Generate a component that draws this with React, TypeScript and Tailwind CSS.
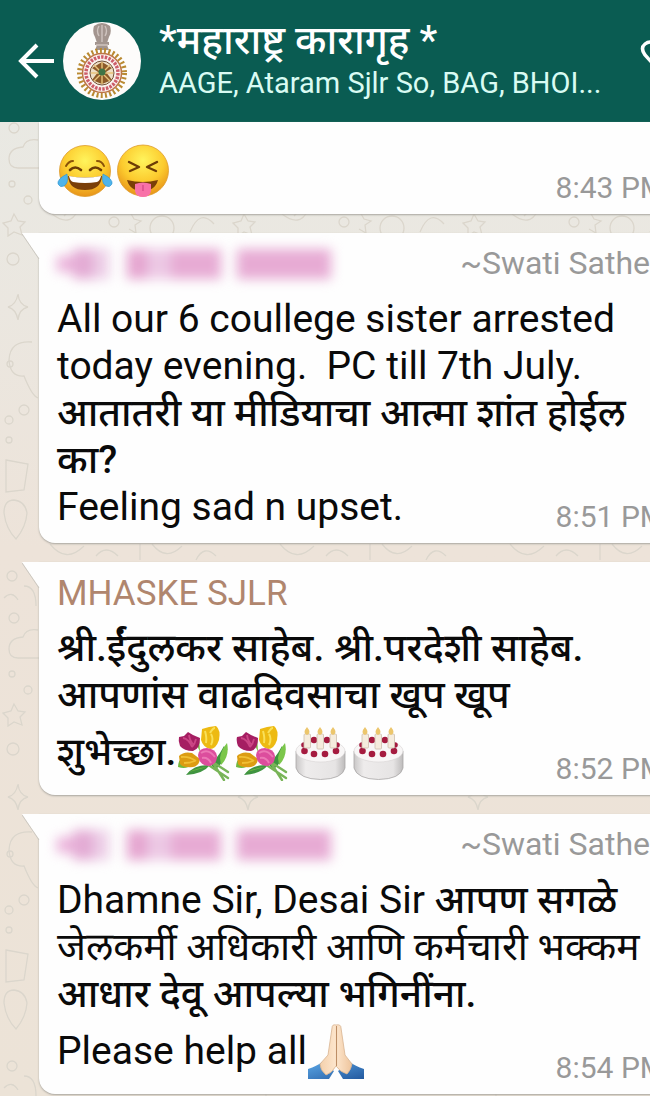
import type { ReactNode } from "react";

const EMOJI = "mt-1.5 mb-0.5 inline-block h-14 w-[58px] align-[-18px]";

function Gradients() {
  return (
    <svg width="0" height="0" className="absolute" aria-hidden="true">
      <defs>
        <radialGradient id="face" cx="0.5" cy="0.3" r="0.75">
          <stop offset="0" stopColor="#fff45c" />
          <stop offset="0.55" stopColor="#fccb2e" />
          <stop offset="1" stopColor="#e48a15" />
        </radialGradient>
        <linearGradient id="cake" x1="0" x2="1">
          <stop offset="0" stopColor="#c9c7c7" />
          <stop offset="0.2" stopColor="#eeecec" />
          <stop offset="0.8" stopColor="#e6e4e4" />
          <stop offset="1" stopColor="#bdbbbb" />
        </linearGradient>
        <linearGradient id="sleeve" x1="0" x2="1" y2="1">
          <stop offset="0" stopColor="#5ba7e6" />
          <stop offset="1" stopColor="#23599f" />
        </linearGradient>
        <linearGradient id="skin" x1="0" x2="1">
          <stop offset="0" stopColor="#f4d0ac" />
          <stop offset="0.5" stopColor="#fde6cd" />
          <stop offset="1" stopColor="#eec49c" />
        </linearGradient>
      </defs>
    </svg>
  );
}

function Joy() {
  return (
    <svg viewBox="0 0 58 56" className={EMOJI} role="img" aria-label="Tears of joy">
      <circle cx="28" cy="27" r="25.5" fill="url(#face)" stroke="#dd9a2b" strokeWidth="0.8" />
      <path d="M9 22q3-5 7-5M40 17q5 0 7 5" fill="none" stroke="#8a5208" strokeWidth="2" strokeLinecap="round" />
      <path d="M13 26q5-5 11 0M33 26q5-5 11 0" fill="none" stroke="#6d3d06" strokeWidth="2.6" strokeLinecap="round" />
      <path d="M11 32q17 3 34 0q-1 14-17 14t-17-14z" fill="#7a3f08" />
      <path d="M12 32q16 3 32 0q-1 5-4 6q-12 2-24 0q-3-1-4-6z" fill="#fff" />
      <path d="M10 30q2 9-3 12q-4 2-6-2q-1-5 9-10zM46 30q-2 9 3 12q4 2 6-2q1-5-9-10z" fill="#4fb4ea" stroke="#2f93d2" strokeWidth="0.6" />
    </svg>
  );
}

function Squint() {
  return (
    <svg viewBox="0 0 58 56" className={EMOJI} role="img" aria-label="Squinting with tongue">
      <circle cx="28" cy="26.5" r="25.5" fill="url(#face)" stroke="#dd9a2b" strokeWidth="0.8" />
      <path d="M14 18l10 5l-9 4M42 18l-10 5l9 4" fill="none" stroke="#6d3d06" strokeWidth="2.4" strokeLinecap="round" strokeLinejoin="round" />
      <path d="M12 36q16 4 31 0q-3 11-15.5 11t-15.5-11z" fill="#7a3f08" />
      <path d="M20 40q8-3 16 0v7q-1 6-8 6t-8-6z" fill="#f871a8" />
      <path d="M28 41v6" stroke="#d84c88" strokeWidth="1.4" />
    </svg>
  );
}

function Bouquet() {
  return (
    <svg viewBox="0 0 58 56" className={EMOJI} role="img" aria-label="Bouquet">
      <path d="M10 50q8-11 24-10q-7 9-24 10zM34 38q6-2 14-17q5 12-9 24z" fill="#3f9440" />
      <path d="M6 33q-4 3-4 9q9 3 14-3zM23 12q-3 9 1 15zM13 47q8-4 18-5" fill="#72b93e" />
      <path d="M28 37l24 16M32 34l20 13M35 35l13 20" stroke="#78b457" strokeWidth="2.4" strokeLinecap="round" />
      <path d="M44 33q1-8 7-15q3 13-6 22z" fill="#7bc64a" />
      <path d="M3 12l5-1l4-4l5 3l7 3q0 11-7 13q-9 0-13-5q-2-5-1-9z" fill="#a51e62" />
      <path d="M7 13q6 1 9 9M13 10q1 7 5 10M20 14q-1 5-4 8" stroke="#cb4585" strokeWidth="1.8" fill="none" />
      <path d="M26 4l7-2l7-1q5 4 3 14q-3 9-9 9q-7-2-9-9z" fill="#edba12" />
      <path d="M29 6q2 7 1 12M34 8q3-5 5-5M35 9q3 5 0 11" stroke="#f9e058" strokeWidth="2" fill="none" />
      <path d="M3 31q5-5 13-3l8 6q-1 7-7 8q-10 1-13-3z" fill="#dc9c12" />
      <path d="M5 32q8-1 15 4M8 38q6 0 11-2" stroke="#f1bf34" strokeWidth="1.8" fill="none" />
      <path d="M22 30q1-7 9-7q9 1 10 8q0 8-7 10q-11 0-12-11z" fill="#dc4d9d" />
      <path d="M25 28q7-5 14 4M26 33q6-1 9 5" stroke="#ec78b5" strokeWidth="2" fill="none" />
    </svg>
  );
}

function Cake() {
  return (
    <svg viewBox="0 0 58 56" className={EMOJI} role="img" aria-label="Birthday cake">
      <path d="M4 26v17q3 11 24.5 11.5q22-.5 24.5-11.5v-17z" fill="url(#cake)" stroke="#aaa7a7" strokeWidth="0.8" />
      <ellipse cx="28.5" cy="26" rx="24.5" ry="11" fill="#f8f6f6" stroke="#d6d3d3" strokeWidth="0.6" />
      <g fill="#a51b3f">
        <circle cx="22" cy="15" r="3.2" />
        <circle cx="35" cy="15" r="3.2" />
        <circle cx="12" cy="20" r="2.8" />
        <circle cx="45" cy="20" r="2.8" />
        <circle cx="12.5" cy="26" r="3.3" />
        <circle cx="22" cy="29" r="3.3" />
        <circle cx="33" cy="29" r="3.3" />
        <circle cx="44" cy="26" r="3.3" />
      </g>
      <g fill="#f5ecdd" stroke="#cdbfae" strokeWidth="0.8">
        <rect x="12" y="9" width="6.5" height="14" rx="1" />
        <rect x="25" y="9" width="6.5" height="15" rx="1" />
        <rect x="38" y="9" width="6.5" height="14" rx="1" />
      </g>
      <path d="M15 2q5 6 0 8q-5-2 0-8zM28 2q5 6 0 8q-5-2 0-8zM41 2q5 6 0 8q-5-2 0-8z" fill="#ecc66c" />
    </svg>
  );
}

function Pray() {
  return (
    <svg viewBox="0 0 58 56" className={EMOJI} role="img" aria-label="Folded hands">
      <path d="M1 45q9-3 14-7l12 9l-5 8h-21zM57 45q-9-3-14-7l-12 9l5 8h21z" fill="url(#sleeve)" />
      <path d="M25 4q0-4 4-3q5-1 5 3l4 27l7 9q-1 6-5 10q-7-2-11-8q-4 7-10 9q-6-5-6-11l8-9z" fill="url(#skin)" stroke="#d8b491" strokeWidth="0.8" />
      <path d="M29.5 2v40" fill="none" stroke="#bd8e66" strokeWidth="1.1" />
    </svg>
  );
}

function Avatar() {
  return (
    <svg viewBox="0 0 78 78" className="size-[78px] shrink-0" role="img" aria-label="Group photo">
      <circle cx="39" cy="39" r="39" fill="#fdfcfb" />
      <g fill="#a3958f">
        <path d="M31 4q8-6 16 0q2 6-1 11l-2 6h-10l-2-6q-3-5-1-11z" />
        <path d="M32 20h14v3h-2l2 5h-14l2-5h-2z" />
      </g>
      <path d="M36 4q-3 5 0 10M42 4q3 5 0 10M39 3v17M33 23h12" stroke="#cfc4bf" strokeWidth="1.4" fill="none" />
      <circle cx="39" cy="51" r="22.5" fill="none" stroke="#b98a32" strokeWidth="5" strokeDasharray="2 2.3" />
      <circle cx="39" cy="51" r="19.5" fill="#fbf2ef" stroke="#bc7547" strokeWidth="1.5" />
      <circle cx="39" cy="51" r="16" fill="none" stroke="#cc5d6a" strokeWidth="3.5" strokeDasharray="2.5 1.2" />
      <circle cx="39" cy="51" r="12" fill="#eedfc5" stroke="#735339" strokeWidth="1" />
      <path d="M29 46l10-6l10 6l-6 4l6 8l-10 4l-10-4l6-8z" fill="#8d5b29" />
      <path d="M39 40v22M28 51h22M31 43l16 16M47 43l-16 16" stroke="#e9c37b" strokeWidth="1.4" />
      <circle cx="39" cy="50" r="3.5" fill="#3f7445" />
    </svg>
  );
}

function Wallpaper() {
  return (
    <svg className="absolute inset-0 -z-10 h-full w-full" aria-hidden="true">
      <defs>
        <linearGradient id="paper" x1="0" y1="0" x2="0" y2="1">
          <stop offset="0" stopColor="#e8eae5" />
          <stop offset="0.28" stopColor="#ebe7e0" />
          <stop offset="0.5" stopColor="#ede3d9" />
          <stop offset="1" stopColor="#ece3d7" />
        </linearGradient>
        <pattern id="doodles" width="230" height="490" y="120" patternUnits="userSpaceOnUse">
          <g fill="none" stroke="#dbd6cc" strokeWidth="1.3">
            <path d="M38 20q-12-2-15 7q-14 1-14 12q0 9 9 9h26M14 94l4 7l7 1l-5 5l2 8l-8-3l-6 4v-8l-5-5l8-2z" />
            <circle cx="14" cy="8" r="5" />
            <circle cx="28" cy="80" r="4" />
            <circle cx="12" cy="64" r="3" />
            <circle cx="13" cy="139" r="6" />
            <path d="M18 174q1 11 10 13q-9 2-10 13q-2-11-10-13q8-2 10-13zM32 222q-22-2-23 18q1 17 15 16q8 20 14 22" />
            <path d="M52 94q18 14 26-4M64 96q16-19 30-2M130 92l4 7l7 2l-6 4l1 8l-7-4M190 112q10-24 24-8" />
            <circle cx="114" cy="102" r="5" />
            <circle cx="162" cy="108" r="12" />
            <circle cx="10" cy="244" r="3" />
            <circle cx="9" cy="300" r="4" />
            <circle cx="9" cy="320" r="3" />
            <circle cx="24" cy="290" r="5" />
            <path d="M6 340l22 4l-4 26l-18 2zM14 380q-10 0-10 13q2 16 12 26q10-12 11-26q-2-12-13-13z" />
            <path d="M50 424q16 20 34 2M96 436q10-12 22 0M140 424v16M152 424q14 18 30 2M196 440q8-16 20-4" />
            <circle cx="12" cy="456" r="5" />
            <path d="M24 466q12 0 12 20M4 478q8-8 14 2" />
          </g>
        </pattern>
      </defs>
      <rect width="100%" height="100%" fill="url(#paper)" />
      <rect width="100%" height="100%" fill="url(#doodles)" />
    </svg>
  );
}

function HiddenNumber() {
  return (
    <div className="flex gap-4 pt-1 blur-[6px]" role="img" aria-label="Hidden number">
      <div className="flex h-[30px] w-[54px] items-center">
        <div className="h-4 w-4 bg-[#eab2da]" />
        <div className="h-[30px] w-5 bg-[#e3abd4]" />
        <div className="h-[30px] w-4 bg-[#eccde6]" />
      </div>
      <div className="flex h-[30px] w-[94px]">
        <div className="w-5 bg-[#e5a5d0]" />
        <div className="w-6 bg-[#ecc8e4]" />
        <div className="flex-1 bg-[#e7abd4]" />
      </div>
      <div className="h-[30px] w-[94px] bg-[#e7abd4]" />
    </div>
  );
}

// Marathi runs are set a little heavier than the Latin text
function Mr({ children }: { children: string }) {
  return (
    <span lang="mr" className="font-medium">
      {children}
    </span>
  );
}

type BubbleProps = {
  time: string;
  author?: ReactNode;
  nick?: string;
  lastLine: ReactNode;
  children?: ReactNode;
};

function Bubble({ time, author, nick, lastLine, children }: BubbleProps) {
  return (
    <article className="relative ml-[39px] rounded-bl-2xl bg-[#fefefe] pr-4 pl-[18px] shadow-[0_1px_2px_#a9a69f]">
      {author ? (
        <>
          <svg viewBox="0 0 18 26" className="absolute top-0 -left-[17px] h-[26px] w-[18px]" aria-hidden="true">
            <path d="M0 0h18v26l-1-1z" fill="#fefefe" />
            <path d="M0 1l17 25" stroke="#cbc8c1" strokeWidth="1" />
          </svg>
          <header className="flex h-[63px] justify-between pt-3 pr-4 leading-10">
            <div className="text-[35px]">{author}</div>
            {nick && <span className="text-[32px] leading-9 text-[#999]">{nick}</span>}
          </header>
        </>
      ) : (
        <div className="h-4" />
      )}
      <div className="text-[39px] leading-[47px] whitespace-pre text-[#0a0a0a]">
        {children}
        <div className="flex items-end justify-between">
          <p className="pb-3">{lastLine}</p>
          <time className="pb-2 text-[30px] leading-9 text-[#999]">{time}</time>
        </div>
      </div>
    </article>
  );
}

export default function App() {
  return (
    <div className="relative isolate min-h-screen overflow-hidden font-[Roboto,'Noto_Sans_Devanagari','Noto_Sans',sans-serif]">
      <Gradients />
      <Wallpaper />

      <header className="flex h-[122px] items-center bg-[#0a5c52] pl-[18px] text-white">
        <button aria-label="Back" className="mr-[9px] shrink-0">
          <svg width="36" height="36" viewBox="0 0 36 36" fill="none" stroke="currentColor" strokeWidth="4">
            <path d="M36 18H3M19 2L3 18l16 16" />
          </svg>
        </button>
        <Avatar />
        <div className="ml-[18px] min-w-0 flex-1">
          <h1 className="text-[40px] leading-[44px] font-medium whitespace-nowrap">*महाराष्ट्र कारागृह *</h1>
          <p className="text-[29px] leading-10 whitespace-nowrap text-[#d9fbf3]">
            AAGE, Ataram Sjlr So, BAG, BHOI...
          </p>
        </div>
        <button aria-label="Attach" className="-mr-[26px] shrink-0">
          <svg width="36" height="44" viewBox="0 0 36 44" fill="none" stroke="currentColor" strokeWidth="3.5">
            <path d="M25 38L5 16Q0 9 5 5t10 0l17 18" />
          </svg>
        </button>
      </header>

      <main className="-mr-8 flex flex-col gap-[19px]">
        <Bubble
          time="8:43 PM"
          lastLine={
            <>
              <Joy />
              <Squint />
            </>
          }
        />

        <Bubble
          time="8:51 PM"
          author={<HiddenNumber />}
          nick="~Swati Sathe"
          lastLine="Feeling sad n upset."
        >
          <p>All our 6 coullege sister arrested</p>
          <p>{"today evening.  PC till 7th July."}</p>
          <p><Mr>आतातरी या मीडियाचा आत्मा शांत होईल</Mr></p>
          <p><Mr>का?</Mr></p>
        </Bubble>

        <Bubble
          time="8:52 PM"
          author={<span className="text-[#b0866e]">MHASKE SJLR</span>}
          lastLine={
            <>
              <Mr>शुभेच्छा.</Mr>
              <Bouquet />
              <Bouquet />
              <Cake />
              <Cake />
            </>
          }
        >
          <p><Mr>श्री.ईंदुलकर साहेब. श्री.परदेशी साहेब.</Mr></p>
          <p><Mr>आपणांस वाढदिवसाचा खूप खूप</Mr></p>
        </Bubble>

        <Bubble
          time="8:54 PM"
          author={<HiddenNumber />}
          nick="~Swati Sathe"
          lastLine={<>Please help all<Pray /></>}
        >
          <p>Dhamne Sir, Desai Sir <Mr>आपण सगळे</Mr></p>
          <p lang="mr">जेलकर्मी अधिकारी आणि कर्मचारी भक्कम</p>
          <p><Mr>आधार देवू आपल्या भगिनींना.</Mr></p>
        </Bubble>
      </main>
    </div>
  );
}
